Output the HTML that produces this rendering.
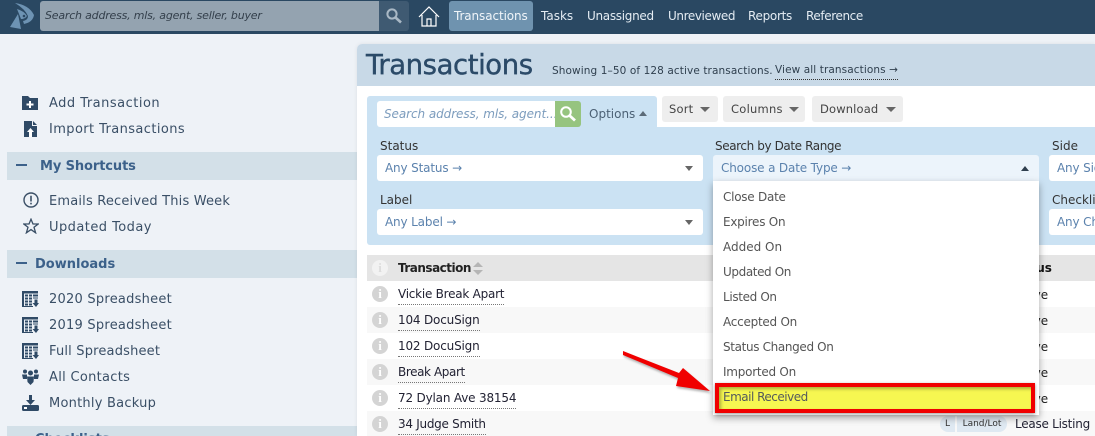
<!DOCTYPE html>
<html style="overflow:hidden;height:436px;"><head><meta charset="utf-8">
<style>
html,body{margin:0;padding:0;}
body{width:1095px;height:436px;overflow:hidden;background:#eef2f7;position:relative;font-family:"DejaVu Sans","Liberation Sans",sans-serif;font-size:13px;color:#33475b;}
#w{position:absolute;left:0;top:0;width:1095px;height:436px;overflow:hidden;}
.a{position:absolute;white-space:nowrap;}
.t{position:absolute;white-space:nowrap;line-height:18px;}
.nav{color:#e4ecf3;font-size:12px;top:7px;}
.side{color:#3a4f66;font-size:13px;letter-spacing:.3px;left:49px;}
.hd{color:#3c618a;font-weight:bold;font-size:13px;}
.lab{color:#333;font-size:12px;}
.ph{color:#5b82ad;font-size:12px;letter-spacing:-.15px;}
.dd{color:#555;font-size:12px;left:723px;letter-spacing:-.25px;}
.rowlink{color:#223;font-size:12px;left:398px;border-bottom:1px dotted #777;line-height:16px;padding-bottom:2px;}
.i{position:absolute;left:372px;width:16px;height:16px;border-radius:50%;background:#d4d4d4;color:#fff;font:bold 13px/16px "Liberation Serif",serif;text-align:center;}
.tri{position:absolute;width:0;height:0;border-left:4px solid transparent;border-right:4px solid transparent;border-top:5px solid #666;}
.btn{position:absolute;top:96px;height:26px;background:#eee;border-radius:3px;}
.ve{position:absolute;left:1011px;font-size:12px;color:#222;line-height:18px;}
</style></head><body><div id="w">

<!-- top bar -->
<div class="a" style="left:0;top:0;width:1095px;height:34px;background:#2a4862;"></div>
<svg class="a" style="left:0;top:0" width="40" height="32" viewBox="0 0 40 32"><path d="M15 3Q29 5 34 15Q33 22 24 24L23 21Q28 20 28 16Q25 9 15 3Z" fill="#6d93b3"/><path d="M17 9Q24 11 27 16Q25 19 21 19Z" fill="#6d93b3"/><path d="M18 14L21 29L10 27Z" fill="#6d93b3"/><circle cx="24" cy="16" r="1.300" fill="#2a4862"/></svg>
<div class="a" style="left:40px;top:1px;width:339px;height:30px;background:#94a3b0;border-radius:3px 0 0 3px;"></div>
<div class="t" style="left:45px;top:7px;font-style:italic;font-size:11px;color:#333f4b;letter-spacing:-.2px;">Search address, mls, agent, seller, buyer</div>
<div class="a" style="left:379px;top:1px;width:30px;height:30px;background:#3f5a72;border-radius:0 3px 3px 0;"></div>
<svg class="a" style="left:385px;top:7px" width="18" height="18" viewBox="0 0 18 18"><circle cx="7" cy="7" r="4.600" fill="none" stroke="#a9b8c5" stroke-width="2"/><path d="M10.500 10.500L16 15.500" stroke="#a9b8c5" stroke-width="2.600"/></svg>
<svg class="a" style="left:418px;top:6px" width="22" height="21" viewBox="0 0 22 21"><path d="M1 11L11 1L21 11M4 9V20H18V9M9 20V13H13V20" fill="none" stroke="#fff" stroke-width="1.200"/></svg>
<div class="a" style="left:449px;top:1px;width:84px;height:30px;background:#6f93af;border-radius:3px;"></div>
<div class="t nav" style="left:454px;color:#f0f5f9;letter-spacing:-.1px;">Transactions</div>
<div class="t nav" style="left:541px;">Tasks</div>
<div class="t nav" style="left:587px;letter-spacing:-.3px;">Unassigned</div>
<div class="t nav" style="left:668px;letter-spacing:-.4px;">Unreviewed</div>
<div class="t nav" style="left:748px;letter-spacing:-.3px;">Reports</div>
<div class="t nav" style="left:806px;letter-spacing:-.4px;">Reference</div>

<!-- sidebar -->
<svg class="a" style="left:22px;top:95px" width="17" height="15" viewBox="0 0 17 15"><path d="M0 1H6L8 3H16V15H0Z" fill="#2f4a66"/><path d="M8 6V13M4.500 9.500H11.500" stroke="#fff" stroke-width="2"/></svg>
<div class="t side" style="top:95px;letter-spacing:.5px;">Add Transaction</div>
<svg class="a" style="left:24px;top:121px" width="13" height="16" viewBox="0 0 13 16"><path d="M0 0H8V5H13V16H0ZM9 0L13 4H9Z" fill="#2f4a66"/><path d="M6.500 7L3 11H5V16H8V11H10Z" fill="#fff"/></svg>
<div class="t side" style="top:121px;letter-spacing:.4px;">Import Transactions</div>

<div class="a" style="left:7px;top:152px;width:350px;height:28px;background:#d3e0e8;"></div>
<div class="a" style="left:16px;top:164px;width:11px;height:2px;background:#3c618a;"></div>
<div class="t hd" style="left:40px;top:158px;letter-spacing:-.1px;">My Shortcuts</div>
<svg class="a" style="left:23px;top:192px" width="16" height="16" viewBox="0 0 16 16"><circle cx="8" cy="8" r="7" fill="none" stroke="#3a4f66" stroke-width="1.400"/><path d="M8 3.800V9.500M8 10.800V12.400" stroke="#3a4f66" stroke-width="1.600"/></svg>
<div class="t side" style="top:193px;letter-spacing:.18px;">Emails Received This Week</div>
<svg class="a" style="left:23px;top:218px" width="16" height="16" viewBox="0 0 16 16"><path d="M8 1.200L10 6H15.200L11 9.200L12.600 14.800L8 11.600L3.400 14.800L5 9.200L.8 6H6Z" fill="none" stroke="#3a4f66" stroke-width="1.300"/></svg>
<div class="t side" style="top:219px;letter-spacing:.45px;">Updated Today</div>

<div class="a" style="left:7px;top:250px;width:350px;height:28px;background:#d3e0e8;"></div>
<div class="a" style="left:16px;top:262px;width:11px;height:2px;background:#3c618a;"></div>
<div class="t hd" style="left:35px;top:256px;">Downloads</div>

<svg width="0" height="0" style="position:absolute"><defs><symbol id="sheet" viewBox="0 0 17 16"><path d="M0 0H16V2.500H2V15H11V16H0Z" fill="#2f4a66"/><path d="M3 3.500H6V5.500H3ZM7 3.500H10V5.500H7ZM11 3.500H16V5.500H11ZM3 6.500H6V8.500H3ZM7 6.500H10V8.500H7ZM11 6.500H16V7.500H11ZM3 9.500H6V11.500H3ZM7 9.500H10V11.500H7ZM3 12.500H6V14.500H3ZM7 12.500H10V14.500H7Z" fill="#2f4a66"/><path d="M12.500 8.500V12H10.500L14 16L17 12H15.500V8.500Z" fill="#2f4a66"/></symbol></defs></svg>
<svg class="a" style="left:22px;top:291px" width="17" height="16"><use href="#sheet"/></svg>
<div class="t side" style="top:291px;letter-spacing:.24px;">2020 Spreadsheet</div>
<svg class="a" style="left:22px;top:317px" width="17" height="16"><use href="#sheet"/></svg>
<div class="t side" style="top:317px;letter-spacing:.24px;">2019 Spreadsheet</div>
<svg class="a" style="left:22px;top:343px" width="17" height="16"><use href="#sheet"/></svg>
<div class="t side" style="top:343px;letter-spacing:.18px;">Full Spreadsheet</div>
<svg class="a" style="left:22px;top:369px" width="17" height="16" viewBox="0 0 17 16"><circle cx="3" cy="2.500" r="2" fill="#2f4a66"/><circle cx="14" cy="2.500" r="2" fill="#2f4a66"/><circle cx="8.500" cy="4" r="2.500" fill="#2f4a66"/><path d="M0 5.500H5V10H1ZM12 5.500H17L16 10H12ZM5 7.500H12L11.500 13L8.500 16L5.500 13Z" fill="#2f4a66"/></svg>
<div class="t side" style="top:369px;">All Contacts</div>
<svg class="a" style="left:22px;top:395px" width="17" height="16" viewBox="0 0 17 16"><path d="M7 0H10V5H13L8.500 10L4 5H7Z" fill="#2f4a66"/><rect x="0" y="10" width="17" height="6" rx="1.500" fill="#2f4a66"/><rect x="2" y="12" width="3" height="2" fill="#fff"/></svg>
<div class="t side" style="top:395px;letter-spacing:.23px;">Monthly Backup</div>

<div class="a" style="left:7px;top:426px;width:350px;height:10px;background:#d3e0e8;"></div>
<div class="t hd" style="left:35px;top:431px;">Checklists</div>

<!-- main panel -->
<div class="a" style="left:357px;top:44px;width:738px;height:392px;background:#fff;border-radius:5px 0 0 0;box-shadow:0 0 4px rgba(0,0,0,.08);"></div>
<div class="a" style="left:357px;top:44px;width:738px;height:42px;background:#c8d9e7;border-radius:5px 0 0 0;"></div>
<div class="a" style="left:366px;top:46px;font-size:27.500px;line-height:38px;color:#2b4a68;letter-spacing:-.42px;-webkit-text-stroke:.4px #2b4a68;">Transactions</div>
<div class="t" style="left:552px;top:62px;font-size:10.500px;color:#2f3f4e;letter-spacing:.1px;">Showing 1–50 of 128 active transactions.</div>
<div class="t" style="left:775px;top:62px;font-size:10.500px;color:#2f3f4e;letter-spacing:.1px;border-bottom:1px dotted #333;line-height:17px;">View all transactions →</div>

<!-- filter -->
<div class="a" style="left:367px;top:96px;width:290px;height:31px;background:#cbe2f3;border-radius:3px 3px 0 0;"></div>
<div class="a" style="left:367px;top:127px;width:728px;height:118px;background:#cbe2f3;border-radius:0 0 0 3px;"></div>
<div class="a" style="left:377px;top:101px;width:178px;height:26px;background:#fff;border-radius:3px 0 0 3px;"></div>
<div class="t" style="left:384px;top:105px;font-style:italic;font-size:12px;color:#7c9cbd;letter-spacing:-.07px;">Search address, mls, agent...</div>
<div class="a" style="left:555px;top:101px;width:26px;height:26px;background:#96c47f;border-radius:0 3px 3px 0;"></div>
<svg class="a" style="left:559px;top:105px" width="18" height="18" viewBox="0 0 18 18"><circle cx="7" cy="7" r="4.800" fill="none" stroke="#fff" stroke-width="2"/><path d="M10.500 10.500L16 15.500" stroke="#fff" stroke-width="2.800"/></svg>
<div class="t" style="left:589px;top:105px;font-size:12px;color:#4c6175;">Options</div>
<div class="tri" style="left:639px;top:111px;border-top:0;border-bottom:5px solid #5c6b78;"></div>

<div class="btn" style="left:662px;width:56px;"></div>
<div class="t" style="left:669px;top:100px;font-size:11.500px;color:#444;letter-spacing:.2px;">Sort</div>
<div class="tri" style="left:700px;top:107px;border-left-width:5px;border-right-width:5px;"></div>
<div class="btn" style="left:723px;width:82px;"></div>
<div class="t" style="left:731px;top:100px;font-size:11.500px;color:#444;letter-spacing:.25px;">Columns</div>
<div class="tri" style="left:789px;top:107px;border-left-width:5px;border-right-width:5px;"></div>
<div class="btn" style="left:812px;width:91px;"></div>
<div class="t" style="left:820px;top:100px;font-size:11.500px;color:#444;letter-spacing:.15px;">Download</div>
<div class="tri" style="left:886px;top:107px;border-left-width:5px;border-right-width:5px;"></div>

<div class="t lab" style="left:380px;top:137px;">Status</div>
<div class="a" style="left:377px;top:155px;width:326px;height:26px;background:#fff;border-radius:3px;"></div>
<div class="t ph" style="left:385px;top:159px;">Any Status →</div>
<div class="tri" style="left:685px;top:166px;"></div>

<div class="t lab" style="left:380px;top:191px;">Label</div>
<div class="a" style="left:377px;top:209px;width:326px;height:26px;background:#fff;border-radius:3px;"></div>
<div class="t ph" style="left:385px;top:213px;">Any Label →</div>
<div class="tri" style="left:685px;top:220px;"></div>

<div class="t lab" style="left:715px;top:137px;letter-spacing:-.4px;">Search by Date Range</div>
<div class="a" style="left:713px;top:155px;width:326px;height:26px;background:#ecf4fb;border-radius:3px 3px 0 0;"></div>
<div class="t ph" style="left:721px;top:159px;">Choose a Date Type →</div>
<div class="tri" style="left:1021px;top:166px;border-top:0;border-bottom:5px solid #2f3f4e;"></div>

<div class="t lab" style="left:1052px;top:137px;">Side</div>
<div class="a" style="left:1049px;top:155px;width:46px;height:26px;overflow:hidden;background:#fff;border-radius:3px 0 0 3px;"><span class="ph" style="position:absolute;left:8px;top:4px;line-height:18px;white-space:nowrap;">Any Side</span></div>
<div class="t lab" style="left:1052px;top:191px;">Checklist</div>
<div class="a" style="left:1049px;top:209px;width:46px;height:26px;background:#fff;border-radius:3px 0 0 3px;overflow:hidden;"><span class="ph" style="position:absolute;left:8px;top:4px;line-height:18px;white-space:nowrap;">Any Checklist</span></div>

<!-- table -->
<div class="a" style="left:367px;top:255px;width:728px;height:26px;background:#e5e5e5;"></div>
<div class="a" style="left:367px;top:307px;width:728px;height:26px;background:#f8f8f8;"></div>
<div class="a" style="left:367px;top:359px;width:728px;height:26px;background:#f8f8f8;"></div>
<div class="a" style="left:367px;top:411px;width:728px;height:25px;background:#f8f8f8;"></div>

<div class="i" style="top:260px;background:#f2f2f2;color:#ddd;">i</div>
<div class="t" style="left:398px;top:259px;font-size:12px;font-weight:bold;color:#222;letter-spacing:-.5px;">Transaction</div>
<div class="tri" style="left:473px;top:262px;border-left-width:5px;border-right-width:5px;border-top:0;border-bottom:5px solid #b5b5b5;"></div>
<div class="tri" style="left:473px;top:270px;border-left-width:5px;border-right-width:5px;border-top:5px solid #b5b5b5;"></div>
<div class="t" style="left:1008px;top:259px;font-size:12px;font-weight:bold;color:#111;">Status</div>

<div class="i" style="top:286px;">i</div><div class="t rowlink" style="top:286px;letter-spacing:-.24px;">Vickie Break Apart</div><div class="ve" style="top:286px;">Active</div>
<div class="i" style="top:312px;">i</div><div class="t rowlink" style="top:312px;letter-spacing:-.18px;">104 DocuSign</div><div class="ve" style="top:312px;">Active</div>
<div class="i" style="top:338px;">i</div><div class="t rowlink" style="top:338px;letter-spacing:-.18px;">102 DocuSign</div><div class="ve" style="top:338px;">Active</div>
<div class="i" style="top:364px;">i</div><div class="t rowlink" style="top:364px;letter-spacing:-.4px;">Break Apart</div><div class="ve" style="top:364px;">Active</div>
<div class="i" style="top:390px;">i</div><div class="t rowlink" style="top:390px;letter-spacing:-.18px;">72 Dylan Ave 38154</div><div class="ve" style="top:390px;">Active</div>
<div class="i" style="top:416px;">i</div><div class="t rowlink" style="top:416px;letter-spacing:-.28px;">34 Judge Smith</div>

<div class="a" style="left:940px;top:416px;width:15px;height:16px;background:#dfe9f2;border-radius:8px 0 0 8px;font-size:9px;line-height:16px;text-align:center;color:#333;">L</div>
<div class="a" style="left:957px;top:416px;width:50px;height:16px;background:#dfe9f2;border-radius:0 8px 8px 0;font-size:9px;line-height:16px;text-align:center;color:#333;">Land/Lot</div>
<div class="t" style="left:1015px;top:415px;font-size:12px;color:#223;letter-spacing:-.25px;">Lease Listing</div>

<!-- dropdown -->
<div class="a" style="left:713px;top:181px;width:326px;height:234px;background:#fff;box-shadow:0 3px 7px rgba(0,0,0,.35);"></div>
<div class="t dd" style="top:188px;">Close Date</div>
<div class="t dd" style="top:213px;">Expires On</div>
<div class="t dd" style="top:238px;letter-spacing:0;">Added On</div>
<div class="t dd" style="top:263px;letter-spacing:-.4px;">Updated On</div>
<div class="t dd" style="top:288px;letter-spacing:-.35px;">Listed On</div>
<div class="t dd" style="top:313px;">Accepted On</div>
<div class="t dd" style="top:338px;letter-spacing:-.35px;">Status Changed On</div>
<div class="t dd" style="top:363px;">Imported On</div>
<div class="a" style="left:715px;top:383px;width:320px;height:30px;box-sizing:border-box;background:#f6f751;border:4px solid #f00000;box-shadow:inset 2px 2px 3px rgba(0,0,0,.3),0 1px 3px rgba(0,0,0,.4);"></div>
<div class="t" style="left:723px;top:388px;font-size:12px;color:#555a5c;letter-spacing:-.5px;">Email Received</div>

<!-- arrow -->
<svg class="a" style="left:615px;top:345px" width="100" height="50" viewBox="0 0 100 50"><path d="M8 6L64 28L68 23L95 46L61 41L63 33L8 10Z" fill="#f00000" style="filter:drop-shadow(1px 2px 1px rgba(0,0,0,.3))"/></svg>

</div></body></html>
